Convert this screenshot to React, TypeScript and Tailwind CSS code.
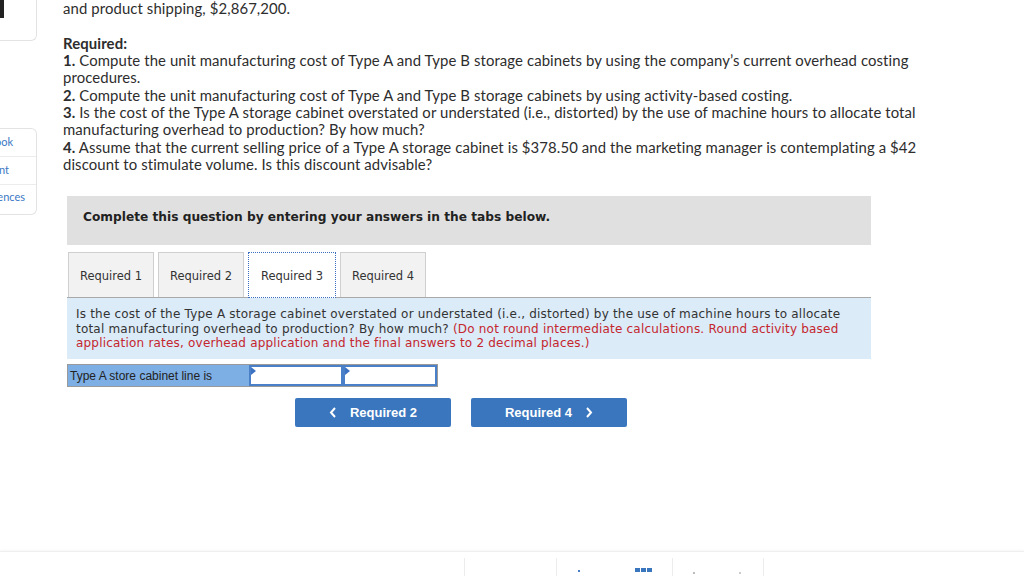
import React from "react";

const body = { fontFamily: "Lato, 'Open Sans', Arial, sans-serif" };
const verd = { fontFamily: "'DejaVu Sans', Verdana, sans-serif" };
const arial = { fontFamily: "'Liberation Sans', Arial, sans-serif" };

function Tab({ label, active }: { label: string; active?: boolean }) {
  if (active) {
    return (
      <div className="w-[88px] h-[46px] -mb-px pt-[2px] bg-white border border-dotted border-[#3b6fc0] flex items-center justify-center text-[11.5px] text-[#333] z-10" style={verd}>
        {label}
      </div>
    );
  }
  return (
    <div className="w-[86px] h-[45px] pt-[2px] bg-[#f2f2f2] border border-[#cfcfcf] border-b-0 flex items-center justify-center text-[11.5px] text-[#333]" style={verd}>
      {label}
    </div>
  );
}

function Field() {
  return (
    <div className="relative w-[94px] h-[21px] bg-white border-2 border-[#4a80c8]">
      <div className="absolute left-0 top-0 w-0 h-0 border-t-[4px] border-b-[4px] border-l-[5px] border-t-transparent border-b-transparent border-l-[#3c72c2]" />
    </div>
  );
}

export default function App() {
  return (
    <div className="w-[1024px] h-[576px] overflow-hidden bg-white flex flex-col">
      <div className="h-[551px] flex">
        {/* sidebar */}
        <div className="w-[37px] flex flex-col shrink-0">
          <div className="h-[41px] border-r border-b border-[#e3e3e3] rounded-br-[6px] relative">
            <div className="absolute left-0 top-0 w-[4px] h-[18px] bg-[#222]" />
          </div>
          <div className="mt-[87px] border border-l-0 border-[#e3e3e3] rounded-r-[6px] text-[11px] text-[#3b78c4]" style={body}>
            <div className="h-[28px] flex items-center justify-end pr-[23px] border-b border-[#ececec]">ook</div>
            <div className="h-[28px] flex items-center justify-end pr-[27px] border-b border-[#ececec]">nt</div>
            <div className="h-[29px] flex items-center justify-end pr-[11px] pb-[4px]">ences</div>
          </div>
        </div>

        {/* main */}
        <div className="pl-[26px] flex flex-col">
          <div className="text-[14.9px] tracking-[0.1px] leading-[17.3px] text-[#2d2d2d] whitespace-nowrap" style={body}>
            <div>and product shipping, $2,867,200.</div>
            <div className="mt-[17.5px] font-bold">Required:</div>
            <div><b>1.</b> Compute the unit manufacturing cost of Type A and Type B storage cabinets by using the company’s current overhead costing</div>
            <div>procedures.</div>
            <div><b>2.</b> Compute the unit manufacturing cost of Type A and Type B storage cabinets by using activity-based costing.</div>
            <div><b>3.</b> Is the cost of the Type A storage cabinet overstated or understated (i.e., distorted) by the use of machine hours to allocate total</div>
            <div>manufacturing overhead to production? By how much?</div>
            <div><b>4.</b> Assume that the current selling price of a Type A storage cabinet is $378.50 and the marketing manager is contemplating a $42</div>
            <div>discount to stimulate volume. Is this discount advisable?</div>
          </div>

          <div className="ml-[4px] mt-[23px] w-[804px]">
            <div className="h-[49px] bg-[#e0e0e0] flex items-center pl-[16px] pb-[8px] text-[12.2px] font-bold text-[#222]" style={verd}>
              Complete this question by entering your answers in the tabs below.
            </div>

            <div className="mt-[7px] pl-[1px] flex items-end gap-[4px]">
              <Tab label="Required 1" />
              <Tab label="Required 2" />
              <Tab label="Required 3" active />
              <Tab label="Required 4" />
            </div>

            <div className="border-t border-[#a9a9a9] bg-[#dcebf8] h-[62px] pl-[9px] pt-[9px] text-[12px] tracking-[0.2px] leading-[14.6px] text-[#333] whitespace-nowrap" style={verd}>
              <div>Is the cost of the Type A storage cabinet overstated or understated (i.e., distorted) by the use of machine hours to allocate</div>
              <div>total manufacturing overhead to production? By how much? <span className="text-[#c4262e]">(Do not round intermediate calculations. Round activity based</span></div>
              <div className="text-[#c4262e]">application rates, overhead application and the final answers to 2 decimal places.)</div>
            </div>

            <div className="mt-[5px] flex w-[371px] border border-[#9a9a9a]">
              <div className="w-[181px] h-[21px] bg-[#7daee4] flex items-center pl-[2px] text-[12px] text-[#222]" style={arial}>
                Type A store cabinet line is
              </div>
              <Field />
              <Field />
            </div>

            <div className="mt-[11px] ml-[228px] flex gap-[20px]">
              <div className="w-[156px] h-[29px] bg-[#3a76bd] rounded-[2px] flex items-center justify-center gap-[13px] text-white text-[13px] font-bold" style={arial}>
                <svg width="8" height="11" viewBox="0 0 8 11"><path d="M6 1 L2 5.5 L6 10" stroke="white" strokeWidth="2" fill="none" /></svg>
                <span>Required 2</span>
              </div>
              <div className="w-[156px] h-[29px] bg-[#3a76bd] rounded-[2px] flex items-center justify-center gap-[13px] text-white text-[13px] font-bold" style={arial}>
                <span>Required 4</span>
                <svg width="8" height="11" viewBox="0 0 8 11"><path d="M2 1 L6 5.5 L2 10" stroke="white" strokeWidth="2" fill="none" /></svg>
              </div>
            </div>
          </div>
        </div>
      </div>

      {/* footer */}
      <div className="h-[25px] border-t border-[#efefef] shadow-[0_-1px_2px_rgba(0,0,0,0.04)] flex pl-[464px] pt-[6px]">
        <div className="w-[92px] border-l border-[#ececec] relative">
          <div className="absolute left-[26px] top-[13px] w-[24px] h-[8px] flex gap-[4px]">
            <div className="w-[4px] h-[2px] bg-[#ccc] mt-[6px]" />
            <div className="w-[8px] h-[2px] bg-[#999] mt-[6px]" />
          </div>
        </div>
        <div className="w-[116px] border-l border-[#ececec] relative">
          <div className="absolute left-[21px] top-[12px] w-[2px] h-[2px] bg-[#4a7fc4]" />
          <div className="absolute left-[78px] top-[10px] flex gap-[1px]">
            <div className="w-[5px] h-[4px] bg-[#3a76bd]" />
            <div className="w-[5px] h-[4px] bg-[#3a76bd]" />
            <div className="w-[5px] h-[4px] bg-[#3a76bd]" />
          </div>
        </div>
        <div className="w-[92px] border-l border-r border-[#ececec] relative">
          <div className="absolute left-[20px] top-[14px] w-[2px] h-[2px] bg-[#bbb]" />
          <div className="absolute left-[66px] top-[14px] w-[2px] h-[2px] bg-[#ccc]" />
        </div>
      </div>
    </div>
  );
}
